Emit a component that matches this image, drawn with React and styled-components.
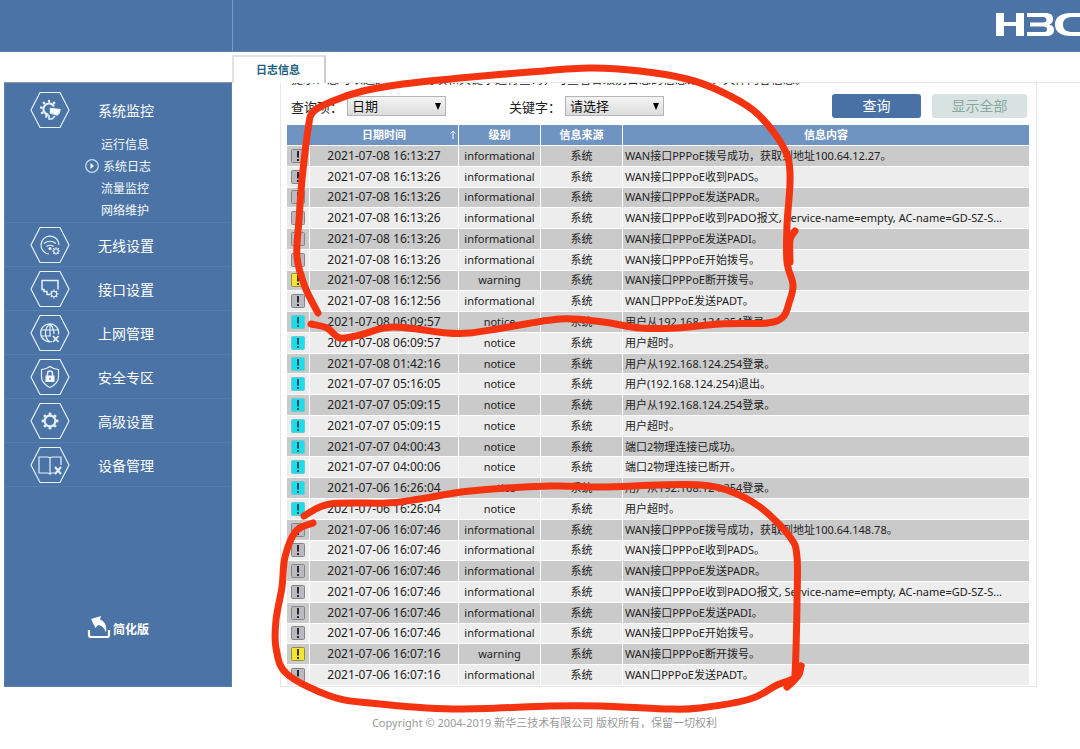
import React, { useState } from "react";
import styled, { createGlobalStyle } from "styled-components";

const GlobalStyle = createGlobalStyle`
  * {
    box-sizing: border-box;
  }
  body {
    margin: 0;
    background: #fff;
    color: #222;
    font-family: "Noto Sans", "Noto Sans CJK SC", sans-serif;
    font-size: 12px;
  }
`;

const Page = styled.div`
  position: relative;
  min-height: 100vh;
  display: flex;
  flex-direction: column;
  overflow: hidden;
`;

const Header = styled.header`
  display: flex;
  height: 52px;
  background: #4b73a6;
  border-bottom: 1px solid #5f83b1;
`;

const HeaderSide = styled.div`
  width: 233px;
  border-right: 1px solid #7f9dc4;
`;

const HeaderMain = styled.div`
  flex: 1;
  display: flex;
  justify-content: flex-end;
  padding-top: 12px;
  overflow: hidden;
`;

const Logo = styled.svg`
  width: 84px;
  height: 26px;
  fill: #fff;
`;

const Body = styled.div`
  flex: 1;
  display: flex;
  padding-left: 4px;
`;

const Sidebar = styled.nav`
  width: 228px;
  margin-top: 30px;
  display: flex;
  flex-direction: column;
  background: #4b73a6;
  border: 1px solid #5c7fae;
  border-top-color: #8d9aa9;
`;

const MenuGroup = styled.div`
  border-bottom: 1px solid #557cae;
`;

const MenuItem = styled.a`
  display: flex;
  align-items: center;
  height: 43px;
  padding-left: 25px;
  gap: 28px;
  color: #fff;
  font-size: 14px;
  text-decoration: none;
`;

const FirstItem = styled(MenuItem)`
  height: 50px;
  padding-top: 4px;
`;

const MenuIcon = styled.svg`
  width: 40px;
  height: 38px;
  fill: none;
  stroke: #e4f1ff;
  stroke-width: 1.2;
`;

const SubMenu = styled.div`
  padding-bottom: 1px;
`;

const SubItem = styled.a`
  display: flex;
  align-items: center;
  justify-content: center;
  gap: 4px;
  height: 22px;
  padding-left: ${({ $active }) => ($active ? 0 : 14)}px;
  color: #f4f9ff;
  font-size: 12px;
  text-decoration: none;
`;

const Simple = styled.a`
  display: flex;
  align-items: flex-end;
  justify-content: center;
  gap: 2px;
  margin-top: auto;
  margin-bottom: 46px;
  color: #fff;
  font-size: 12px;
  font-weight: 700;
  line-height: 20px;
  text-decoration: none;
`;

const Main = styled.main`
  flex: 1;
  min-width: 0;
  display: flex;
  flex-direction: column;
`;

const TabBar = styled.div`
  height: 31px;
  padding-top: 3px;
  display: flex;
  border-bottom: 1px solid #e6e9ea;
`;

const Tab = styled.button`
  width: 94px;
  height: 28px;
  padding: 0 2px 2px 0;
  border: 2px solid #dfe3e7;
  border-right-color: #c9ccd2;
  border-bottom: 0;
  background: #fff;
  color: #1c5f80;
  font: inherit;
  font-size: 11px;
  font-weight: 700;
`;

const Panel = styled.section`
  flex: 1;
  display: flex;
  flex-direction: column;
  margin: 0 43px 0 48px;
  padding: 0 7px 0 6px;
  border: 1px solid #e4e6e8;
  border-top: 0;
`;

const Hint = styled.div`
  height: 2px;
  padding-left: 4px;
  display: flex;
  align-items: flex-end;
  overflow: hidden;
  white-space: nowrap;
  font-size: 12px;
  line-height: 10px;
`;

const Filters = styled.form`
  height: 40px;
  padding: 2px 2px 0 4px;
  display: flex;
  align-items: center;
  font-size: 13px;
`;

const Field = styled.label`
  display: flex;
  align-items: center;
  gap: 4px;
  margin-right: 63px;
`;

const SelectWrap = styled.span`
  position: relative;
  display: flex;
`;

const Select = styled.select`
  appearance: none;
  width: 99px;
  height: 20px;
  padding: 0 4px;
  border: 1px solid #b4b4b4;
  border-radius: 0;
  background: linear-gradient(#f4f4f4, #dcdcdc);
  color: #111;
  font: inherit;
  line-height: 18px;
`;

const Arrow = styled.svg`
  position: absolute;
  right: 5px;
  top: 7px;
  width: 6px;
  height: 7px;
  pointer-events: none;
`;

const Buttons = styled.div`
  display: flex;
  gap: 11px;
  margin-left: auto;
`;

const Button = styled.button`
  width: ${({ $muted }) => ($muted ? 95 : 89)}px;
  height: 24px;
  padding: 0;
  border: 0;
  border-radius: 3px;
  background: ${({ $muted }) => ($muted ? "#d8e3e1" : "#4a71a5")};
  color: ${({ $muted }) => ($muted ? "#8aa79f" : "#fff")};
  font: inherit;
  font-size: 14px;
  line-height: 24px;
`;

const TableArea = styled.div`
  flex: 1;
  display: grid;
`;

const Table = styled.table`
  width: 100%;
  height: 100%;
  table-layout: fixed;
  border-collapse: separate;
  border-spacing: 0;
  line-height: 16px;
`;

const Th = styled.th`
  position: relative;
  width: ${({ $width }) => ($width ? `${$width}px` : "auto")};
  height: 21px;
  padding: 0;
  border-right: ${({ $join }) => ($join ? 0 : 1)}px solid #fff;
  border-bottom: 1px solid #fff;
  background: #7094c1;
  color: #fff;
  font-size: 11px;
  font-weight: 700;
`;

const SortArrow = styled.svg`
  position: absolute;
  right: 2px;
  top: 5px;
  width: 6px;
  height: 9px;
`;

const Row = styled.tr`
  background: ${({ $dark }) => ($dark ? "#cacaca" : "#ededed")};
`;

const Td = styled.td`
  padding: ${({ $left }) => ($left ? "0 7px 0 2px" : "0")};
  border-right: ${({ $left }) => ($left ? 0 : 1)}px solid #fff;
  border-bottom: 1px solid #fff;
  text-align: ${({ $left }) => ($left ? "left" : "center")};
  font-size: ${({ $date }) => ($date ? 12 : 11)}px;
  white-space: nowrap;
  overflow: hidden;
  text-overflow: ellipsis;
`;

const StatusIcon = styled.svg`
  display: block;
  margin: 0 auto;
  width: 14px;
  height: 14px;
`;

const Footer = styled.footer`
  height: 62px;
  padding: 26px 0 0 9px;
  color: #999;
  font-size: 11px;
  line-height: 20px;
  text-align: center;
`;

const Marks = styled.svg`
  position: absolute;
  left: 0;
  top: 0;
  width: 1080px;
  height: 749px;
  fill: none;
  stroke: #f43410;
  stroke-width: 7;
  stroke-linecap: round;
  stroke-linejoin: round;
  pointer-events: none;
`;

const statusColors = {
  informational: ["#babac0", "#85858b", "#222"],
  warning: ["#f4e535", "#98903c", "#332f00"],
  notice: ["#1fdde8", "#6cc9d0", "#0b4a63"],
};

const service = "WAN接口PPPoE收到PADO报文, Service-name=empty, AC-name=GD-SZ-S...";

const logs = [
  ["2021-07-08 16:13:27", "informational", "WAN接口PPPoE拨号成功，获取到地址100.64.12.27。"],
  ["2021-07-08 16:13:26", "informational", "WAN接口PPPoE收到PADS。"],
  ["2021-07-08 16:13:26", "informational", "WAN接口PPPoE发送PADR。"],
  ["2021-07-08 16:13:26", "informational", service],
  ["2021-07-08 16:13:26", "informational", "WAN接口PPPoE发送PADI。"],
  ["2021-07-08 16:13:26", "informational", "WAN接口PPPoE开始拨号。"],
  ["2021-07-08 16:12:56", "warning", "WAN接口PPPoE断开拨号。"],
  ["2021-07-08 16:12:56", "informational", "WAN口PPPoE发送PADT。"],
  ["2021-07-08 06:09:57", "notice", "用户从192.168.124.254登录。"],
  ["2021-07-08 06:09:57", "notice", "用户超时。"],
  ["2021-07-08 01:42:16", "notice", "用户从192.168.124.254登录。"],
  ["2021-07-07 05:16:05", "notice", "用户(192.168.124.254)退出。"],
  ["2021-07-07 05:09:15", "notice", "用户从192.168.124.254登录。"],
  ["2021-07-07 05:09:15", "notice", "用户超时。"],
  ["2021-07-07 04:00:43", "notice", "端口2物理连接已成功。"],
  ["2021-07-07 04:00:06", "notice", "端口2物理连接已断开。"],
  ["2021-07-06 16:26:04", "notice", "用户从192.168.124.254登录。"],
  ["2021-07-06 16:26:04", "notice", "用户超时。"],
  ["2021-07-06 16:07:46", "informational", "WAN接口PPPoE拨号成功，获取到地址100.64.148.78。"],
  ["2021-07-06 16:07:46", "informational", "WAN接口PPPoE收到PADS。"],
  ["2021-07-06 16:07:46", "informational", "WAN接口PPPoE发送PADR。"],
  ["2021-07-06 16:07:46", "informational", service],
  ["2021-07-06 16:07:46", "informational", "WAN接口PPPoE发送PADI。"],
  ["2021-07-06 16:07:46", "informational", "WAN接口PPPoE开始拨号。"],
  ["2021-07-06 16:07:16", "warning", "WAN接口PPPoE断开拨号。"],
  ["2021-07-06 16:07:16", "informational", "WAN口PPPoE发送PADT。"],
];

// pen strokes drawn over the page
const strokes = [
  [
    [318, 313], [305, 287], [297, 257], [299, 220], [302, 180], [308, 130], [313, 112],
    [333, 101], [363, 91], [403, 84], [460, 78], [530, 72], [590, 68], [640, 71], [687, 79],
    [720, 91], [753, 110], [775, 134], [788, 158], [790, 183], [787, 225], [787, 262],
    [793, 285], [789, 303], [783, 317], [767, 323], [720, 324], [677, 328], [640, 328],
    [603, 322], [560, 319], [503, 328], [470, 333], [447, 333], [393, 327], [360, 335],
    [340, 338], [327, 328], [311, 324],
  ],
  [[795, 231], [790, 240], [790, 262]],
  [
    [304, 516], [330, 504], [387, 503], [420, 499], [470, 491], [550, 486], [600, 487],
    [660, 485], [700, 485], [727, 490], [760, 507], [790, 537], [797, 557], [797, 603],
    [796, 650], [795, 675],
  ],
  [
    [313, 523], [296, 531], [285, 557], [282, 587], [276, 620], [276, 648], [287, 674],
    [330, 696], [370, 703], [453, 709], [550, 706], [600, 706], [667, 709], [700, 708],
    [750, 699], [777, 685], [797, 677], [801, 666],
  ],
  [[801, 666], [796, 678], [787, 687]],
];

const toPath = (pts) => {
  let d = `M${pts[0]}`;
  for (let i = 0; i < pts.length - 1; i++) {
    const a = pts[i - 1] || pts[i];
    const b = pts[i];
    const c = pts[i + 1];
    const e = pts[i + 2] || c;
    d += `C${b[0] + (c[0] - a[0]) / 6} ${b[1] + (c[1] - a[1]) / 6} ${c[0] - (e[0] - b[0]) / 6} ${c[1] - (e[1] - b[1]) / 6} ${c}`;
  }
  return d;
};

const Gear = ({ x, y, r }) => (
  <g transform={`translate(${x} ${y})`}>
    <circle r={r} strokeWidth={r > 4 ? 2.2 : 1.1} />
    {[0, 45, 90, 135, 180, 225, 270, 315].map((a) => (
      <path key={a} d={`M0 ${-r - 0.5}v${-r / 2.2}`} strokeWidth={r / 2} transform={`rotate(${a})`} />
    ))}
  </g>
);

const icons = {
  monitor: (
    <>
      <path d="M24 15.5a5.600 5.600 0 1 0-5.500 8.200" strokeWidth="2" />
      {[-160, -120, -80, -40, 0, 40].map((a) => (
        <path key={a} d="M0-6.500v-2.600" strokeWidth="2.200" transform={`translate(19 18) rotate(${a})`} />
      ))}
      <path d="M20.500 17.500l9.500 1-.8 3.500-2.200 2-6.500-2z" fill="#fff" strokeWidth="1.400" />
      <path d="M19 24v4h3l3-3" strokeWidth="1.600" />
    </>
  ),
  wifi: (
    <>
      <path d="M19 28a9 9 0 1 1 10-9M14 17.500q6-4.500 12 0M16.500 20.500q3.500-2.500 7 0" />
      <circle cx="20" cy="22.500" r="1" fill="#fff" />
      <Gear x={26} y={25} r={2.3} />
    </>
  ),
  port: (
    <>
      <path d="M20 24.500h-3v-3h-3v-2h-2V10.500h16v9" strokeWidth="1.500" />
      <Gear x={24} y={24} r={2.7} />
    </>
  ),
  globe: (
    <>
      <path d="M22 27.500a9 9 0 1 1 6.500-7M20 10c-6 4-6 14 0 18M20 10q4 4 4 10M20 10v12M11 16h18M11 22h10" />
      <path d="M23 22l5.500 6M28.500 22l-5.500 6" strokeWidth="1.800" />
    </>
  ),
  shield: (
    <>
      <path d="M20 8.500q4 3 8.500 3v7q0 7-8.500 11-8.500-4-8.500-11v-7q4.500 0 8.500-3z" />
      <path d="M17.500 18v-2.500a2.500 2.500 0 0 1 5 0V18" strokeWidth="1.500" />
      <path d="M16 18h8v5.500h-8z" fill="#fff" />
      <path d="M20 19.500v2.500" stroke="#4b73a6" />
    </>
  ),
  gear: <Gear x={20} y={19} r={5.4} />,
  book: (
    <>
      <path d="M25 27h-3q-2 0-2 1-1-1-3-1H9V11h8q2 0 3 1 1-1 3-1h8v8M20 12v16" />
      <path d="M25 21l6 7M31 21l-6 7" strokeWidth="2" />
    </>
  ),
};

const menu = [
  ["无线设置", "wifi"],
  ["接口设置", "port"],
  ["上网管理", "globe"],
  ["安全专区", "shield"],
  ["高级设置", "gear"],
  ["设备管理", "book"],
];

const HexIcon = ({ name }) => (
  <MenuIcon viewBox="0 0 40 38" aria-hidden="true">
    <path d="M10 1.500h20L39 19l-9 17.500H10L1 19z" />
    {icons[name]}
  </MenuIcon>
);

const LevelIcon = ({ level }) => {
  const [fill, edge, ink] = statusColors[level];
  return (
    <StatusIcon viewBox="0 0 14 14" role="img" aria-label={level}>
      <rect x="0.500" y="0.500" width="13" height="13" rx="1" fill={fill} stroke={edge} />
      <path d="M7 2v6.500M7 10v2" stroke={ink} strokeWidth="1.900" />
    </StatusIcon>
  );
};

function App() {
  const [field, setField] = useState("日期");
  const [keyword, setKeyword] = useState("请选择");

  return (
    <Page>
      <GlobalStyle />
      <Header>
        <HeaderSide />
        <HeaderMain>
          <Logo viewBox="0 0 84 26" role="img" aria-label="H3C">
            <path d="M0 1h8v9h12V1h8v23h-8V14H8v10H0z" />
            <path d="M31 1h18c6 0 8 2 8 6 0 3-1 4.500-4 5.500 4 1 5 2.500 5 5.500 0 4-3 6-8 6H31v-4h16c3 0 4-.5 4-2.500s-1-3-4-3H34v-4h13c2.500 0 3.500-1 3.500-2.500S49.500 5 47 5H31z" />
            <path d="M90 1H75C65 1 59 5 59 12.500S65 24 75 24h15v-4H77c-7 0-10-2.500-10-7.500S70 5 77 5h13z" />
          </Logo>
        </HeaderMain>
      </Header>
      <Body>
        <Sidebar>
          <MenuGroup>
            <FirstItem href="#monitor">
              <HexIcon name="monitor" />
              系统监控
            </FirstItem>
            <SubMenu>
              <SubItem href="#status">运行信息</SubItem>
              <SubItem href="#log" $active>
                <svg width="14" height="14" viewBox="0 0 14 14" fill="none" stroke="#c5dcf5" aria-hidden="true">
                  <circle cx="7" cy="7" r="6.300" strokeWidth="1.300" />
                  <path d="M5.500 4v6l3.500-3z" fill="#fff" stroke="none" />
                </svg>
                系统日志
              </SubItem>
              <SubItem href="#traffic">流量监控</SubItem>
              <SubItem href="#maintain">网络维护</SubItem>
            </SubMenu>
          </MenuGroup>
          {menu.map(([label, icon]) => (
            <MenuGroup key={icon}>
              <MenuItem href={`#${icon}`}>
                <HexIcon name={icon} />
                {label}
              </MenuItem>
            </MenuGroup>
          ))}
          <Simple href="#simple">
            <svg width="24" height="24" viewBox="0 0 24 24" fill="none" stroke="#fff" aria-hidden="true">
              <path d="M2 14v5q0 2 2 2h16q2 0 2-2v-5" strokeWidth="2.200" />
              <path d="M4 3l10-3-1 3.500c5 2 7 6 6 13-2-5-4-7-8-7.500L8.500 12z" fill="#fff" stroke="none" />
            </svg>
            简化版
          </Simple>
        </Sidebar>
        <Main>
          <TabBar>
            <Tab type="button">日志信息</Tab>
          </TabBar>
          <Panel>
            <Hint>提示：您可以通过选择查询项和关键字进行查询，可查看各级别日志的信息来源、具体内容信息。</Hint>
            <Filters onSubmit={(e) => e.preventDefault()}>
              <Field>
                查询项：
                <SelectWrap>
                  <Select value={field} onChange={(e) => setField(e.target.value)}>
                    <option>日期</option>
                  </Select>
                  <Arrow viewBox="0 0 6 7"><path d="M0 0h6L3 7z" /></Arrow>
                </SelectWrap>
              </Field>
              <Field>
                关键字：
                <SelectWrap>
                  <Select value={keyword} onChange={(e) => setKeyword(e.target.value)}>
                    <option>请选择</option>
                  </Select>
                  <Arrow viewBox="0 0 6 7"><path d="M0 0h6L3 7z" /></Arrow>
                </SelectWrap>
              </Field>
              <Buttons>
                <Button type="submit">查询</Button>
                <Button type="button" $muted>显示全部</Button>
              </Buttons>
            </Filters>
            <TableArea>
              <Table>
                <thead>
                  <tr>
                    <Th $width={23} $join />
                    <Th $width={149}>
                      日期时间
                      <SortArrow viewBox="0 0 6 9" fill="none" stroke="#fff">
                        <path d="M3 9V1M0.500 3.500L3 1l2.500 2.500" />
                      </SortArrow>
                    </Th>
                    <Th $width={82}>级别</Th>
                    <Th $width={82}>信息来源</Th>
                    <Th $join>信息内容</Th>
                  </tr>
                </thead>
                <tbody>
                  {logs.map(([time, level, text], i) => (
                    <Row key={i} $dark={i % 2 === 0}>
                      <Td><LevelIcon level={level} /></Td>
                      <Td $date>{time}</Td>
                      <Td>{level}</Td>
                      <Td>系统</Td>
                      <Td $left>{text}</Td>
                    </Row>
                  ))}
                </tbody>
              </Table>
            </TableArea>
          </Panel>
        </Main>
      </Body>
      <Footer>Copyright © 2004-2019 新华三技术有限公司 版权所有，保留一切权利</Footer>
      <Marks viewBox="0 0 1080 749" aria-hidden="true">
        {strokes.map((pts, i) => (
          <path key={i} d={toPath(pts)} />
        ))}
      </Marks>
    </Page>
  );
}

export default App;
